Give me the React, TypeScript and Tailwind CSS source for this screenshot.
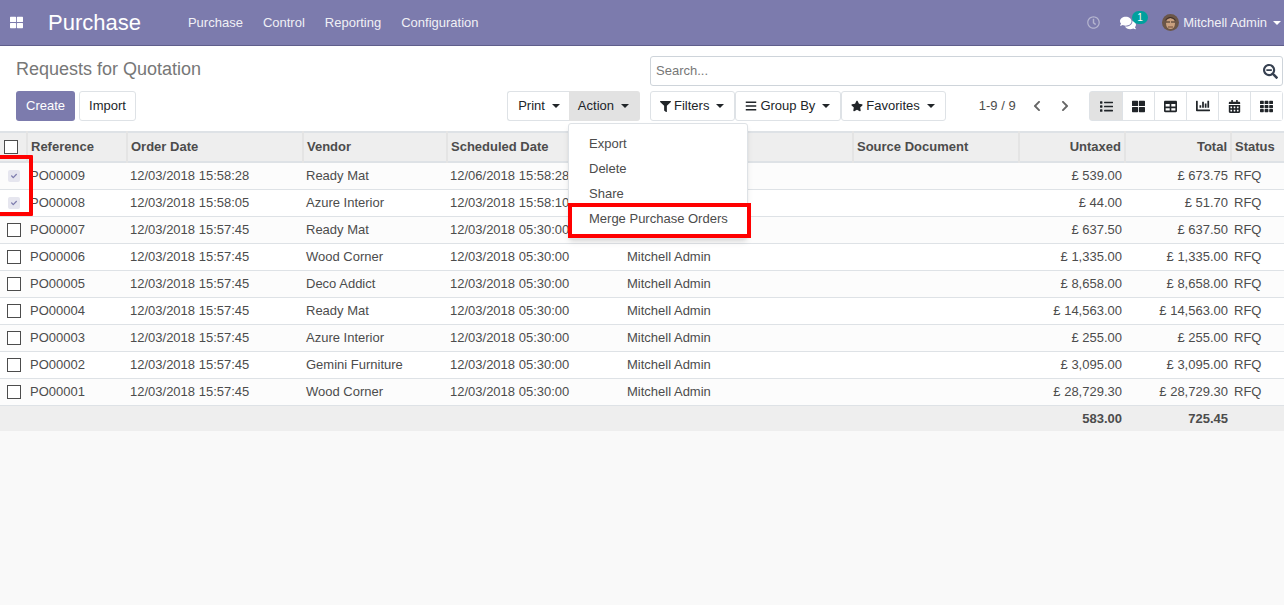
import {
  FaThLarge,
  FaRegClock,
  FaComments,
  FaFilter,
  FaBars,
  FaStar,
  FaList,
  FaTable,
  FaChartBar,
  FaCalendarAlt,
  FaTh,
  FaSearchMinus,
  FaChevronLeft,
  FaChevronRight,
  FaCheck,
} from "react-icons/fa";

type Order = {
  ref: string;
  date: string;
  vendor: string;
  scheduled: string;
  rep: string;
  untaxed: string;
  total: string;
  checked?: boolean;
};

const orders: Order[] = [
  { ref: "PO00009", date: "12/03/2018 15:58:28", vendor: "Ready Mat", scheduled: "12/06/2018 15:58:28", rep: "", untaxed: "£ 539.00", total: "£ 673.75", checked: true },
  { ref: "PO00008", date: "12/03/2018 15:58:05", vendor: "Azure Interior", scheduled: "12/03/2018 15:58:10", rep: "", untaxed: "£ 44.00", total: "£ 51.70", checked: true },
  { ref: "PO00007", date: "12/03/2018 15:57:45", vendor: "Ready Mat", scheduled: "12/03/2018 05:30:00", rep: "", untaxed: "£ 637.50", total: "£ 637.50" },
  { ref: "PO00006", date: "12/03/2018 15:57:45", vendor: "Wood Corner", scheduled: "12/03/2018 05:30:00", rep: "Mitchell Admin", untaxed: "£ 1,335.00", total: "£ 1,335.00" },
  { ref: "PO00005", date: "12/03/2018 15:57:45", vendor: "Deco Addict", scheduled: "12/03/2018 05:30:00", rep: "Mitchell Admin", untaxed: "£ 8,658.00", total: "£ 8,658.00" },
  { ref: "PO00004", date: "12/03/2018 15:57:45", vendor: "Ready Mat", scheduled: "12/03/2018 05:30:00", rep: "Mitchell Admin", untaxed: "£ 14,563.00", total: "£ 14,563.00" },
  { ref: "PO00003", date: "12/03/2018 15:57:45", vendor: "Azure Interior", scheduled: "12/03/2018 05:30:00", rep: "Mitchell Admin", untaxed: "£ 255.00", total: "£ 255.00" },
  { ref: "PO00002", date: "12/03/2018 15:57:45", vendor: "Gemini Furniture", scheduled: "12/03/2018 05:30:00", rep: "Mitchell Admin", untaxed: "£ 3,095.00", total: "£ 3,095.00" },
  { ref: "PO00001", date: "12/03/2018 15:57:45", vendor: "Wood Corner", scheduled: "12/03/2018 05:30:00", rep: "Mitchell Admin", untaxed: "£ 28,729.30", total: "£ 28,729.30" },
];

const menus = ["Purchase", "Control", "Reporting", "Configuration"];
const actions = ["Export", "Delete", "Share", "Merge Purchase Orders"];

function Caret({ className = "border-t-[#212529]" }: { className?: string }) {
  return <span className={`inline-block h-0 w-0 border-x-[4px] border-t-[4px] border-x-transparent ${className}`} />;
}

function Avatar() {
  return (
    <svg width="17" height="17" viewBox="0 0 17 17">
      <circle cx="8.5" cy="8.5" r="8.5" fill="#6b5648" />
      <ellipse cx="8.5" cy="9.5" rx="4.5" ry="5.5" fill="#c9a07f" />
      <path d="M3 7 Q8 1 14 7 L13 5 Q8 1 4 5 Z" fill="#3a2c25" />
      <path d="M4 8h4M9 8h4" stroke="#3a2c25" strokeWidth="1" />
      <path d="M6 13h5" stroke="#6e4a3a" strokeWidth="1" />
    </svg>
  );
}

function Checkbox({ checked }: { checked?: boolean }) {
  if (checked) {
    return (
      <span className="flex h-[12px] w-[12px] items-center justify-center rounded-[2px] bg-[#e6e6ef] text-[#7c7bad]">
        <FaCheck size={6} />
      </span>
    );
  }
  return <span className="block h-[14px] w-[14px] border border-[#4c4c4c] bg-white" />;
}

const viewIcons = [
  <FaList size={13} />,
  <FaThLarge size={13} />,
  <FaTable size={13} />,
  <FaChartBar size={14} />,
  <FaCalendarAlt size={13} />,
  <FaTh size={13} />,
];

export default function App() {
  return (
    <div className="relative flex min-h-[605px] flex-col bg-[#f9f9f9] font-['Liberation_Sans',sans-serif] text-[13px] text-[#4c4c4c]">
      <header className="flex h-[46px] items-center border-b border-[#5f5e8b] bg-[#7c7bad] text-white">
        <FaThLarge size={13} className="ml-[10px]" />
        <span className="ml-[25px] text-[22px]">Purchase</span>
        <nav className="ml-[47px] flex gap-5 text-[#f0f0f5]">
          {menus.map((menu) => (
            <span key={menu}>{menu}</span>
          ))}
        </nav>
        <div className="ml-auto flex items-center pr-[3px]">
          <FaRegClock size={13} className="text-[#b5b5cf]" />
          <span className="relative ml-[20px] mr-[26px]">
            <FaComments size={16} />
            <span className="absolute -top-[4px] left-[12px] rounded-[8px] bg-[#00a09d] px-[5px] text-[10px] leading-[13px]">1</span>
          </span>
          <Avatar />
          <span className="ml-[4px] mr-[6px] text-[#f0f0f5]">Mitchell Admin</span>
          <Caret className="border-t-white" />
        </div>
      </header>

      <div className="grid h-[85px] grid-cols-2 bg-white">
        <div className="pl-4">
          <h1 className="mt-[12px] text-[18px] leading-[22px] text-[#777]">Requests for Quotation</h1>
          <div className="mt-[11px] flex items-start">
            <button className="h-[30px] rounded-[3px] bg-[#7c7bad] px-[10px] text-white">Create</button>
            <button className="ml-[4px] h-[30px] rounded-[3px] border border-[#dee2e6] bg-white px-[9px] text-[#212529]">Import</button>
            <div className="ml-auto mr-[2px] flex">
              <button className="flex h-[30px] items-center gap-[7px] rounded-l-[3px] border border-r-0 border-[#dee2e6] bg-white pl-[10px] pr-[9px] text-[#212529]">
                Print <Caret />
              </button>
              <button className="flex h-[30px] items-center gap-[7px] rounded-r-[3px] bg-[#e2e2e2] pl-[9px] pr-[11px] text-[#212529]">
                Action <Caret />
              </button>
            </div>
          </div>
        </div>
        <div className="pl-2 pr-px">
          <div className="mt-[10px] flex h-[30px] items-center rounded-[3px] border border-[#ced4da] bg-white pl-[5px] pr-[4px]">
            <span className="flex-1 text-[#777]">Search...</span>
            <FaSearchMinus size={15} className="text-[#374151]" />
          </div>
          <div className="mt-[5px] flex items-center">
            <button className="flex h-[30px] items-center gap-[7px] rounded-[3px] border border-[#dee2e6] bg-white pl-[9px] pr-[10px] text-[#212529]">
              <span className="flex items-center gap-[3px]"><FaFilter size={11} />Filters</span> <Caret />
            </button>
            <button className="flex h-[30px] items-center gap-[7px] rounded-[3px] border border-[#dee2e6] bg-white pl-[9px] pr-[10px] text-[#212529]">
              <span className="flex items-center gap-[3px]"><FaBars size={12} />Group By</span> <Caret />
            </button>
            <button className="flex h-[30px] items-center gap-[7px] rounded-[3px] border border-[#dee2e6] bg-white pl-[9px] pr-[10px] text-[#212529]">
              <span className="flex items-center gap-[3px]"><FaStar size={12} />Favorites</span> <Caret />
            </button>
            <span className="ml-[33px] text-[#4c4c4c]">1-9 / 9</span>
            <FaChevronLeft size={12} className="ml-[15px] text-[#666]" />
            <FaChevronRight size={12} className="ml-[16px] text-[#666]" />
            <div className="ml-auto flex h-[30px] rounded-[3px] border border-[#dee2e6]">
              {viewIcons.map((icon, i) => (
                <span
                  key={i}
                  className={`flex w-[32px] items-center justify-center text-[#212529] ${i === 0 ? "bg-[#e2e2e2]" : "border-l border-[#dee2e6] bg-white"}`}
                >
                  {icon}
                </span>
              ))}
            </div>
          </div>
        </div>
      </div>

      <table className="w-full table-fixed border-collapse bg-white">
        <colgroup>
          <col className="w-[27px]" />
          <col className="w-[100px]" />
          <col className="w-[176px]" />
          <col className="w-[144px]" />
          <col className="w-[177px]" />
          <col className="w-[229px]" />
          <col className="w-[166px]" />
          <col className="w-[106px]" />
          <col className="w-[106px]" />
          <col className="w-[53px]" />
        </colgroup>
        <thead className="bg-[#eeeeee] font-bold">
          <tr className="h-[30px] border-y-2 border-[#dee2e6]">
            <th className="px-[4px]"><Checkbox /></th>
            {["Reference", "Order Date", "Vendor", "Scheduled Date", "Representative", "Source Document"].map((label) => (
              <th key={label} className="border-l-2 border-[#e4e4e4] px-[3px] text-left">{label}</th>
            ))}
            <th className="border-l-2 border-[#e4e4e4] px-[3px] text-right">Untaxed</th>
            <th className="border-l-2 border-[#e4e4e4] px-[3px] text-right">Total</th>
            <th className="border-l-2 border-[#e4e4e4] px-[3px] text-left">Status</th>
          </tr>
        </thead>
        <tbody>
          {orders.map((order, i) => (
            <tr key={order.ref} className={`h-[27px] border-b border-[#dee2e6] ${i % 2 === 0 ? "bg-[#fcfcfc]" : "bg-white"}`}>
              <td className="px-[3px]">
                <span className="flex justify-center"><Checkbox checked={order.checked} /></span>
              </td>
              <td className="px-[3px]">{order.ref}</td>
              <td className="px-[3px]">{order.date}</td>
              <td className="px-[3px]">{order.vendor}</td>
              <td className="px-[3px]">{order.scheduled}</td>
              <td className="px-[3px]">{order.rep}</td>
              <td className="px-[3px]" />
              <td className="px-[3px] text-right">{order.untaxed}</td>
              <td className="px-[3px] text-right">{order.total}</td>
              <td className="px-[3px]">RFQ</td>
            </tr>
          ))}
        </tbody>
        <tfoot>
          <tr className="h-[26px] bg-[#eeeeee] font-bold">
            <td colSpan={7} />
            <td className="px-[3px] text-right">583.00</td>
            <td className="px-[3px] text-right">725.45</td>
            <td />
          </tr>
        </tfoot>
      </table>

      {/* open Action menu */}
      <div className="absolute left-[568px] top-[123px] w-[180px] rounded-[3px] border border-[#dee2e6] bg-white py-[7px] shadow-md">
        {actions.map((action) => (
          <div key={action} className="h-[25px] pl-[20px] leading-[25px]">{action}</div>
        ))}
      </div>

      {/* red annotations */}
      <div className="absolute left-[568px] top-[203px] h-[35px] w-[183px] border-[4px] border-[#ff0000]" />
      <div className="absolute left-[-4px] top-[155px] h-[61px] w-[37px] rounded-[1px] border-[4px] border-[#ff0000]" />
    </div>
  );
}
